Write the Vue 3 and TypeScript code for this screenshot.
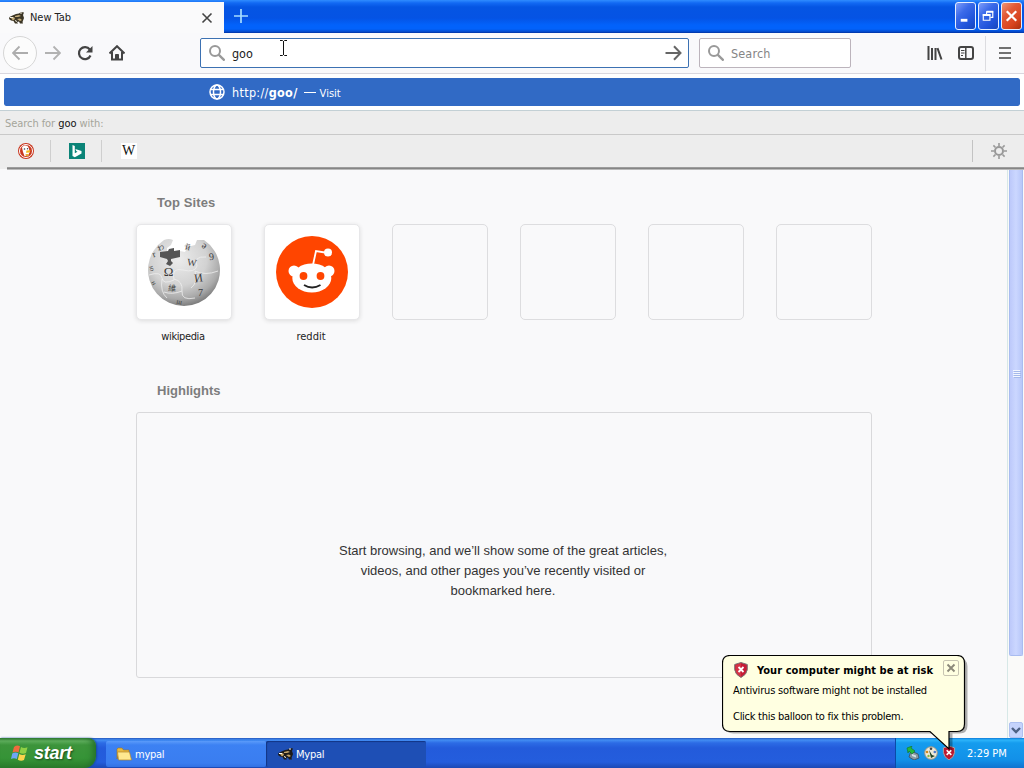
<script setup lang="ts">
const emptyTiles: number[] = [1, 2, 3, 4]
const globeGlyphs: { c: string; x: number; y: number; s: number; r: number }[] = [
  { c: 'Ω', x: 21.5, y: 41, s: 13, r: 0 },
  { c: 'W', x: 44.5, y: 31, s: 10, r: 8 },
  { c: 'И', x: 52, y: 47, s: 12, r: -8 },
  { c: '維', x: 25, y: 56, s: 8, r: 4 },
  { c: '7', x: 53.5, y: 61, s: 10, r: 0 },
  { c: '9', x: 65, y: 25, s: 10, r: -8 },
  { c: 'й', x: 40, y: 15, s: 9, r: 15 },
  { c: 'ə', x: 56, y: 13, s: 10, r: 30 },
  { c: 'ю', x: 3, y: 34, s: 7, r: 75 },
  { c: 'r', x: 8, y: 22, s: 9, r: -20 },
  { c: 'わ', x: 15, y: 15, s: 7, r: -30 },
  { c: 'н', x: 5, y: 49, s: 7, r: 60 },
  { c: 'ш', x: 32, y: 69, s: 7, r: 10 },
]
</script>

<template>
  <div class="screen">
    <header class="titlebar">
      <div class="tab">
        <svg class="badger" viewBox="0 0 16 14"><path d="M.5 6l3-1.500L7 3l3-.5L12 1l3 .5-1 2.500 1 3-1.500 4 .5 1.500h-3l-1-2-2 .5 1 1.500H6L4.500 10 2 9.500 0 8z" fill="#3b3525"/><path d="M2 7l3-1 1 2-2 1.500M6 5l4-1 2 1-3 1-3 0M8 8l3-.5 2 1.500-2 1M6 11l2 1" fill="#c6ae7b"/><path d="M1 6.500h3M11 2l2 0M6 9.500l2 1" stroke="#f4efdf"/></svg>
        <span class="tab-text">New Tab</span>
        <svg class="tab-close" viewBox="0 0 12 12"><path d="M1.500 1.500l9 9m0-9l-9 9" stroke="#444" stroke-width="1.6"/></svg>
      </div>
      <svg class="plus" viewBox="0 0 14 14"><path d="M7 0v14M0 7h14" stroke="#a5dcff" stroke-width="1.7"/></svg>
      <div class="winbtns">
        <div class="wb"><svg viewBox="0 0 20 26"><path d="M5 17.500h7" stroke="#fff" stroke-width="3"/></svg></div>
        <div class="wb"><svg viewBox="0 0 20 26"><path d="M8 11V8.500h6.500v6H12" fill="none" stroke="#fff" stroke-width="1.2"/><path d="M8 8.500h7" stroke="#fff" stroke-width="2"/><path d="M4.500 11.500h7v6h-7z" fill="none" stroke="#fff" stroke-width="1.2"/><path d="M4 12h8" stroke="#fff" stroke-width="2"/></svg></div>
        <div class="wb red"><svg viewBox="0 0 20 26"><path d="M5 8l10 10M15 8L5 18" stroke="#fff" stroke-width="2.3"/></svg></div>
      </div>
    </header>

    <nav class="toolbar">
      <div class="back"><svg viewBox="0 0 16 16"><path d="M16 8H1M7.500 1.500L1 8l6.500 6.500" fill="none" stroke="#adadad" stroke-width="1.8"/></svg></div>
      <svg class="ico fwd" viewBox="0 0 16 16"><path d="M0 8h15M8.500 1.500L15 8l-6.500 6.500" fill="none" stroke="#b2b2b2" stroke-width="1.8"/></svg>
      <svg class="ico reload" viewBox="0 0 16 16"><path d="M12.800 4.500A6 6 0 1 0 13.500 10.500" fill="none" stroke="#444" stroke-width="2.2"/><path d="M15.500 1v6.500H9z" fill="#444"/></svg>
      <svg class="ico home" viewBox="0 0 16 16"><path d="M.5 8.500L8 1.200l7.500 7.300M3 7v7.500h10V7" fill="none" stroke="#444" stroke-width="2"/><path d="M6.500 14V9.500h3V14" fill="#444" stroke="#444"/></svg>
      <div class="url">
        <svg class="mag" viewBox="0 0 16 16"><circle cx="6" cy="6" r="5" fill="none" stroke="#999" stroke-width="2"/><path d="M9.600 9.600l6 6" stroke="#999" stroke-width="2.300"/></svg>
        <span class="typed">goo</span>
        <svg class="go" viewBox="0 0 16 16"><path d="M0 8h15M8.500 1.200L15 8l-6.500 6.800" fill="none" stroke="#666" stroke-width="2"/></svg>
        <svg class="ibeam" viewBox="0 0 7 16"><path d="M0 .5h2.500l1 1 1-1H7M3.500 1v14M0 15.500h2.500l1-1 1 1H7" fill="none" stroke="#111"/></svg>
      </div>
      <div class="search">
        <svg class="mag" viewBox="0 0 16 16"><circle cx="6" cy="6" r="5" fill="none" stroke="#999" stroke-width="2"/><path d="M9.600 9.600l6 6" stroke="#999" stroke-width="2.300"/></svg>
        <span class="ph">Search</span>
      </div>
      <svg class="ico lib" viewBox="0 0 16 16"><path d="M1.500 1v14M5 3v12M8.500 3v12M10.500 3.200l4 11.300" stroke="#444" stroke-width="2"/></svg>
      <svg class="ico side" viewBox="0 0 16 16"><rect x="1" y="2" width="14" height="12" rx="2" fill="none" stroke="#444" stroke-width="2"/><path d="M7.800 2v12" stroke="#444" stroke-width="1.500"/><path d="M3 5.500h3.500M3 8h3.500M3 10.500h2" stroke="#444"/></svg>
      <div class="menu"><svg viewBox="0 0 12 12"><path d="M0 1h12M0 6h12M0 11h12" stroke="#444" stroke-width="1.700"/></svg></div>
    </nav>

    <section class="popup">
      <div class="result">
        <svg class="world" viewBox="0 0 16 16"><g fill="none" stroke="#fff" stroke-width="1.500"><circle cx="8" cy="8" r="7"/><ellipse cx="8" cy="8" rx="3.500" ry="7"/><path d="M1.800 5.500h12.400M1.800 10.500h12.400"/></g></svg>
        <span class="addr">http://<b>goo/</b></span>
        <span class="dash"></span>
        <span class="visit">Visit</span>
      </div>
      <div class="searchfor"><span>Search for <em>goo</em> with:</span></div>
      <div class="engines">
        <div class="eng"><svg viewBox="0 0 16 16"><circle cx="8" cy="8" r="8" fill="#c9371f"/><circle cx="8" cy="8" r="6.500" fill="none" stroke="#fff" stroke-width="1"/><path d="M4 4.500c2-3 6.500-2.500 7 1.500l.8 3-2 4-3.300 0-1.500-4z" fill="#fff"/><path d="M8.500 7.500l4-.3-.8 2.300-3.700.3z" fill="#f5b81c"/><path d="M7.500 11l3 0 .3 2-3 .3z" fill="#e8a93a"/><circle cx="6.500" cy="6" r=".8" fill="#345"/><circle cx="9.500" cy="5.700" r=".7" fill="#345"/></svg></div>
        <div class="eng"><svg viewBox="0 0 16 16"><path d="M0 0h16v16H0z" fill="#0b8478"/><path d="M3.500 2l2.300.9v7.400l2.700-1.500-1.300-.7-.8-2.100L12.500 8v2.500l-6.700 3.700-2.300-1.300z" fill="#fff"/></svg></div>
        <div class="eng"><span class="w">W</span></div>
        <div class="gear"><svg viewBox="0 0 16 16"><g stroke="#999" fill="none"><circle cx="8" cy="8" r="4" stroke-width="2"/><path d="M8 0v3M8 13v3M0 8h3M13 8h3M2.400 2.400l2.100 2.100M11.500 11.500l2.100 2.100M2.400 13.600l2.100-2.100M11.500 4.500l2.100-2.100" stroke-width="1.600"/></g></svg></div>
      </div>
    </section>

    <main class="content">
      <div class="page">
        <h2>Top Sites</h2>
        <div class="tiles">
          <div class="site">
            <div class="tile full">
              <svg class="logo" viewBox="0 0 74 74">
                <defs><radialGradient id="ball" cx=".42" cy=".3" r=".72"><stop offset="0" stop-color="#ececec"/><stop offset=".55" stop-color="#d2d2d2"/><stop offset=".82" stop-color="#aaa"/><stop offset="1" stop-color="#787878"/></radialGradient></defs>
                <path d="M17 5Q22 3 26 5L24 10l-4 3 0 5 12 3 1-5 5 1 2-4-3-2 3-3 4 3 4-1 2-5h7A36 36 0 1 1 17 5z" fill="url(#ball)"/>
                <path d="M13 22l0-5 8-1 1-2 5-1 0 3 6-1 0 7-9 2 0 2 2 2-3 3-4-2 2-3-1-2z" fill="#555"/>
                <g fill="none" stroke="#efefef" stroke-width=".8"><path d="M2 40q12-4 13 3t12 2q-3-13 9-10t14-4q-4-10 9-9M15 44q-2 13 5 19M27 44q9 2 8 12t13 7M48 36q3 12-4 17M48 36q10 5 23 0M35 56q-10 4-18 1"/></g>
                <g class="glyph"><text v-for="g in globeGlyphs" :key="g.c" :x="g.x" :y="g.y" :font-size="g.s" :transform="`rotate(${g.r} ${g.x} ${g.y})`" text-anchor="middle">{{ g.c }}</text></g>
              </svg>
            </div>
            <span class="cap wiki">wikipedia</span>
          </div>
          <div class="site">
            <div class="tile full">
              <svg class="logo round" viewBox="0 0 72 72"><circle cx="36" cy="36" r="36" fill="#ff4500"/><path d="M37 29l3-14 12 2" fill="none" stroke="#fff" stroke-width="1.800"/><circle cx="52" cy="16.500" r="4" fill="#fff"/><circle cx="18" cy="35" r="5.500" fill="#fff"/><circle cx="53" cy="35" r="5.500" fill="#fff"/><ellipse cx="35.800" cy="42" rx="19.500" ry="14.500" fill="#fff"/><circle cx="27.500" cy="40" r="3.900" fill="#ff4500"/><circle cx="44.500" cy="40" r="3.900" fill="#ff4500"/><path d="M28 49q8 5 16.500 0" fill="none" stroke="#222" stroke-width="1.800"/></svg>
            </div>
            <span class="cap">reddit</span>
          </div>
          <div v-for="n in emptyTiles" :key="n" class="site"><div class="tile"></div></div>
        </div>
        <h2 class="hl">Highlights</h2>
        <div class="box"><p>Start browsing, and we’ll show some of the great articles,<br>videos, and other pages you’ve recently visited or<br>bookmarked here.</p></div>
      </div>
      <aside class="scroll">
        <div class="thumb"><i></i><i></i><i></i><i></i></div>
        <div class="down"><svg viewBox="0 0 10 8"><path d="M1 2l4 4 4-4" fill="none" stroke="#4d6185" stroke-width="2.400"/></svg></div>
      </aside>
    </main>

    <footer class="taskbar">
      <div class="start">
        <svg class="flag" viewBox="0 0 18 18"><path d="M3 3q3-2.500 6-.7L7.500 8.500Q5 7 1.500 8.500z" fill="#ef6b3e"/><path d="M10 3q3 2 6.500.3L15 9q-3 1.500-6.500-.2z" fill="#8fd045"/><path d="M1.300 9.500q3-1.800 6-.3L5.800 15Q3 13.500 0 15z" fill="#6ea6f5"/><path d="M8.300 10q3 1.800 6.400.3L13 16q-3 1.500-6.200-.3z" fill="#fbd44c"/></svg>
        <span>start</span>
      </div>
      <div class="task">
        <svg class="folder" viewBox="0 0 16 14"><path d="M1 2l1-1h4l1.500 2H13v3H3L1 12z" fill="#e8b93f" stroke="#9d7320" stroke-width=".6"/><path d="M1.500 5h12l2 8H2.500z" fill="#ffe88f" stroke="#b28528" stroke-width=".7"/></svg>
        <span>mypal</span>
      </div>
      <div class="task on">
        <svg class="badger" viewBox="0 0 16 14"><path d="M.5 6l3-1.500L7 3l3-.5L12 1l3 .5-1 2.500 1 3-1.500 4 .5 1.500h-3l-1-2-2 .5 1 1.500H6L4.500 10 2 9.500 0 8z" fill="#1d1b18"/><path d="M2 7l3-1 1 2-2 1.500M6 5l4-1 2 1-3 1-3 0M8 8l3-.5 2 1.500-2 1M6 11l2 1" fill="#c6a568"/><path d="M1 6.500h3M11 2l2 0M6 9.500l2 1" stroke="#fff"/></svg>
        <span>Mypal</span>
      </div>
      <div class="tray">
        <svg class="ti" viewBox="0 0 14 14"><path d="M5 5l7 3 1 4-5 2-5-3z" fill="#8b9aa2" stroke="#34454d" stroke-width=".7"/><path d="M6 8l4 1.500v2L6 10z" fill="#d5e2e5"/><path d="M1 2l5-2-1 2 4 3-3 3-3-3-1 2z" fill="#25b83c" stroke="#137524" stroke-width=".6"/></svg>
        <svg class="ti" viewBox="0 0 14 14"><circle cx="7" cy="7" r="6.300" fill="#eee9d8" stroke="#9c9683"/><circle cx="7" cy="2.800" r="1.300" fill="#444"/><circle cx="3" cy="6" r="1.300" fill="#cf8c20"/><circle cx="10.800" cy="6" r="1.300" fill="#4a79c9"/><path d="M5 4l2 8 4-2-3-1z" fill="#242"/><circle cx="4.500" cy="10" r="1.200" fill="#84b83e"/></svg>
        <svg class="ti" viewBox="0 0 14 15"><path d="M7 0l6 2v5q-.5 5-6 8Q1.500 12 1 7V2z" fill="#bd1830" stroke="#aaa"/><path d="M4.500 4.500l5 5m0-5l-5 5" stroke="#fff" stroke-width="1.700"/></svg>
        <span>2:29 PM</span>
      </div>
    </footer>

    <div class="balloon">
      <svg class="shape" viewBox="0 0 250 104"><path d="M8 1h226q8 0 8 8v59q0 8-8 8h-7v18L208 76H8q-8 0-8-8V9q0-8 8-8z" transform="translate(3.500 2.500)" fill="#000" opacity=".3"/><path d="M8 .5h227q7.500 0 7.500 7.500v61q0 7.500-7.500 7.500h-8v17.500L208 76.500H8Q.5 76.500.5 69V8Q.5.5 8 .5z" fill="#ffffe1" stroke="#000" stroke-width="1.200"/></svg>
      <div class="bhead">
        <svg class="shield" viewBox="0 0 14 16"><path d="M7 .5l6.300 2v5.200q-.5 4.700-6.300 7.800Q1.200 12.400.7 7.700V2.500z" fill="#c51c35" stroke="#777"/><path d="M7 1v14Q2 12 1.500 7.500V3z" fill="#df4552" opacity=".6"/><path d="M4.500 5l5 5m0-5l-5 5" stroke="#fff" stroke-width="1.800"/></svg>
        <b>Your computer might be at risk</b>
        <div class="bx"><svg viewBox="0 0 10 10"><path d="M1.500 1.500l7 7m0-7l-7 7" stroke="#8c897a" stroke-width="1.900"/></svg></div>
      </div>
      <p class="l1">Antivirus software might not be installed</p>
      <p class="l2">Click this balloon to fix this problem.</p>
    </div>
  </div>
</template>

<style>
body { margin: 0; overflow: hidden; }
</style>

<style scoped>
* { box-sizing: border-box; }
svg { display: block; flex: none; }
span, b { white-space: nowrap; }
.screen { position: relative; width: 1024px; height: 768px; display: flex; flex-direction: column; overflow: hidden; background: #f9f9fa; font-family: "DejaVu Sans Condensed", "DejaVu Sans", sans-serif; font-stretch: condensed; font-size: 11px; color: #222; }
.titlebar { height: 33px; flex: none; display: flex; background: linear-gradient(#2f8cff 0, #1269f3 3px, #0555e3 7px, #0553e4 18px, #0262fb 25px, #0262fb 29px, #0347c5 32px, #002d9c 33px); }
.tab { width: 224px; height: 31px; margin-top: 2px; padding: 0 11px 0 9px; background: #fafafb; display: flex; align-items: center; }
.badger { width: 16px; height: 14px; }
.tab-text { margin-left: 5px; letter-spacing: -.05px; }
.tab-close { width: 12px; height: 12px; margin-left: auto; }
.plus { width: 14px; height: 14px; margin: 9px 0 0 10px; }
.winbtns { margin: 2px 2px 0 auto; display: flex; gap: 2px; }
.wb { width: 21px; height: 28px; border: 1px solid #e6efff; border-radius: 3px; background: linear-gradient(135deg, #7f9dfa 0, #3b6ae9 35%, #2154db 70%, #1746bd); }
.wb svg { width: 19px; height: 26px; }
.wb.red { background: linear-gradient(135deg, #ee9576 0, #e25a37 35%, #d94520 70%, #a9300e); }
.toolbar { height: 41px; flex: none; display: flex; align-items: center; background: #f9f9fb; border-bottom: 1px solid #d9d7df; }
.back { width: 34px; height: 34px; margin-left: 3px; border: 1px solid #d6d6d6; border-radius: 50%; background: #fcfcfc; display: grid; place-items: center; }
.back svg, .ico { width: 16px; height: 16px; }
.fwd { margin-left: 8px; }
.reload { margin-left: 16px; }
.home { margin-left: 16px; }
.url { position: relative; width: 489px; height: 30px; margin-left: 75px; border: 1px solid #3c71b2; border-radius: 2px; background: #fff; display: flex; align-items: center; padding: 0 6px 0 8px; }
.mag { width: 16px; height: 16px; }
.typed { font-size: 12.5px; margin-left: 7px; letter-spacing: -.05px; }
.go { width: 17px; height: 16px; margin-left: auto; }
.ibeam { position: absolute; left: 79px; top: 1px; width: 7px; height: 16px; }
.search { width: 152px; height: 30px; margin-left: 10px; border: 1px solid #bcb4bc; border-radius: 2px; background: #fff; display: flex; align-items: center; padding-left: 8px; }
.ph { font-size: 12.5px; margin-left: 7px; color: #858585; letter-spacing: .15px; }
.lib { margin-left: 76px; }
.side { margin-left: 15px; }
.menu { width: 39px; height: 35px; margin-left: 11px; border-left: 1px solid #dcdce0; display: flex; align-items: center; padding-left: 13px; }
.menu svg { width: 12px; height: 12px; }
.popup { flex: none; height: 95px; background: #ededed; position: relative; z-index: 1; }
.popup::after { content: ""; position: absolute; left: 7px; right: 0; bottom: -1px; height: 3px; background: linear-gradient(#a8a8a8, #858585 50%, #d5d5d5); }
.result { height: 36px; border: 4px solid #fff; border-radius: 6px; background: #316ac5; background-clip: padding-box; display: flex; align-items: center; padding-left: 205px; color: #fff; box-shadow: 0 0 0 4px #fff; clip-path: inset(0); }
.world { width: 16px; height: 16px; }
.addr { font-size: 12.5px; margin-left: 7px; letter-spacing: .32px; }
.dash { width: 12px; height: 1px; margin-left: 6px; background: #fff; }
.visit { margin-left: 4px; padding-top: 3px; }
.searchfor { height: 25px; border-top: 1px solid #c3d0d5; border-bottom: 1px solid #c9c9c9; padding: 1px 5px 0; display: flex; align-items: center; color: #a5a59b; letter-spacing: -.06px; }
.searchfor em { font-style: normal; color: #111; }
.engines { display: flex; height: 32px; align-items: center; }
.eng { width: 51px; height: 22px; display: grid; place-items: center; border-right: 1px solid #cfcfcf; padding-left: 2px; }
.eng:nth-child(3) { border: 0; }
.eng svg { width: 16px; height: 16px; }
.w { width: 16px; height: 16px; background: #fff; font: 14px/16px "Liberation Serif", serif; color: #111; text-align: center; }
.gear { width: 52px; height: 22px; margin-left: auto; border-left: 1px solid #c3c3c3; display: grid; place-items: center; }
.gear svg { width: 16px; height: 16px; }
.content { flex: 1; display: flex; min-height: 0; background: #f9f9fa; }
.page { flex: 1; padding: 26px 0 0 136px; }
h2 { margin: 0 0 0 21px; font: bold 13px/16px "Liberation Sans", Arial, sans-serif; color: #7d7d7d; letter-spacing: .08px; }
.tiles { display: flex; gap: 32px; margin-top: 13px; height: 142px; }
.site { width: 96px; }
.tile { width: 96px; height: 96px; border: 1px solid #dddddf; border-radius: 5px; }
.tile.full { background: #fff; border-color: #e7e7e9; box-shadow: 0 1px 4px #dcdcdc; display: grid; place-items: center; }
.logo { width: 74px; height: 74px; }
.logo.round { width: 72px; height: 72px; }
.glyph { fill: #3b3b3b; font-family: "Liberation Serif", "Noto Sans CJK SC", serif; }
.cap { display: block; text-align: center; margin-top: 10px; line-height: 14px; padding-right: 2px; }
.cap.wiki { letter-spacing: -.38px; }
.hl { margin-top: 17px; letter-spacing: 0; }
.box { width: 736px; height: 266px; margin-top: 13px; border: 1px solid #d9d9db; border-radius: 3px; padding-top: 128px; }
.box p { margin: 0; text-align: center; font: 13px/20px "Liberation Sans", Arial, sans-serif; color: #333; padding-right: 2px; }
.scroll { width: 17px; display: flex; flex-direction: column; background: #fafaf9; border-left: 1px solid #d7e8e7; padding: 0 1px; }
.thumb { height: 487px; background: linear-gradient(90deg, #bdc9fa, #cbd7ff 50%, #b8c7f9); border: 1px solid #a9bcf0; border-top: 0; border-radius: 0 0 2px 2px; display: flex; flex-direction: column; align-items: center; padding-top: 201px; }
.thumb i { width: 7px; height: 1px; margin-bottom: 1px; background: #f2f6ff; box-shadow: 1px 1px #a5b9ea; }
.down { margin: auto 0 0; height: 16px; background: #c5d3fc; border: 1px solid #adc0f0; border-radius: 2px; display: grid; place-items: center; }
.down svg { width: 10px; height: 8px; }
.taskbar { height: 30px; flex: none; display: flex; background: linear-gradient(#2558bd 0, #428df3 2px, #2c6be5 5px, #235bdb 10px, #245ddd 24px, #1c48b4 30px); color: #fff; }
.start { width: 96px; height: 30px; border-radius: 0 8px 12px 0; background: linear-gradient(#2f7b31 0, #5fae5d 3px, #3c943b 7px, #369437 20px, #2a7c2b 30px); box-shadow: inset -5px 0 6px -2px #25702a, 1px 0 2px #174c9c; display: flex; align-items: center; padding-left: 11px; }
.flag { width: 18px; height: 18px; }
.start span { margin-left: 5px; font: italic bold 18px/20px "Liberation Sans", Arial, sans-serif; text-shadow: 1px 1px 2px #1a4a1c; letter-spacing: -.25px; }
.task { width: 160px; height: 26px; margin: 3px 0 0 10px; border-radius: 2px; background: linear-gradient(#5b9bfa, #3c81f3 4px, #3a7df0 22px, #3271e3); display: flex; align-items: center; padding-left: 10px; }
.task.on { margin-left: 0; background: #1e4fb5; box-shadow: inset 1px 1px 1px #123584; padding-left: 12px; }
.folder { width: 16px; height: 14px; }
.task span { margin-left: 3px; letter-spacing: -.25px; }
.task.on span { margin-left: 2px; padding-top: 1px; }
.tray { width: 129px; margin-left: auto; background: linear-gradient(#0e7ad8 0, #2db4fa 2px, #159cee 5px, #1290e8 22px, #1173cf 30px); border-left: 1px solid #0a4ba8; display: flex; align-items: center; padding-left: 10px; }
.ti { width: 14px; height: 14px; margin-right: 4px; }
.tray span { margin-left: 7px; }
.balloon { position: absolute; z-index: 3; left: 722px; top: 655px; width: 250px; height: 104px; color: #000; }
.shape { position: absolute; z-index: -1; left: 0; top: 0; width: 250px; height: 104px; }
.bhead { height: 22px; display: flex; align-items: center; padding: 8px 0 0 12px; }
.shield { width: 14px; height: 16px; }
.bhead b { width: 179px; margin-left: 9px; letter-spacing: .07px; }
.bx { width: 16px; height: 16px; margin-left: 7px; margin-top: -5px; border: 1px solid #c8c5b2; border-radius: 2px; display: grid; place-items: center; flex: none; }
.bx svg { width: 10px; height: 10px; }
.balloon p { margin: 0 0 0 11px; line-height: 14px; white-space: nowrap; }
.balloon .l1 { margin-top: 7px; letter-spacing: -.18px; }
.balloon .l2 { margin-top: 12px; letter-spacing: -.27px; }
</style>
